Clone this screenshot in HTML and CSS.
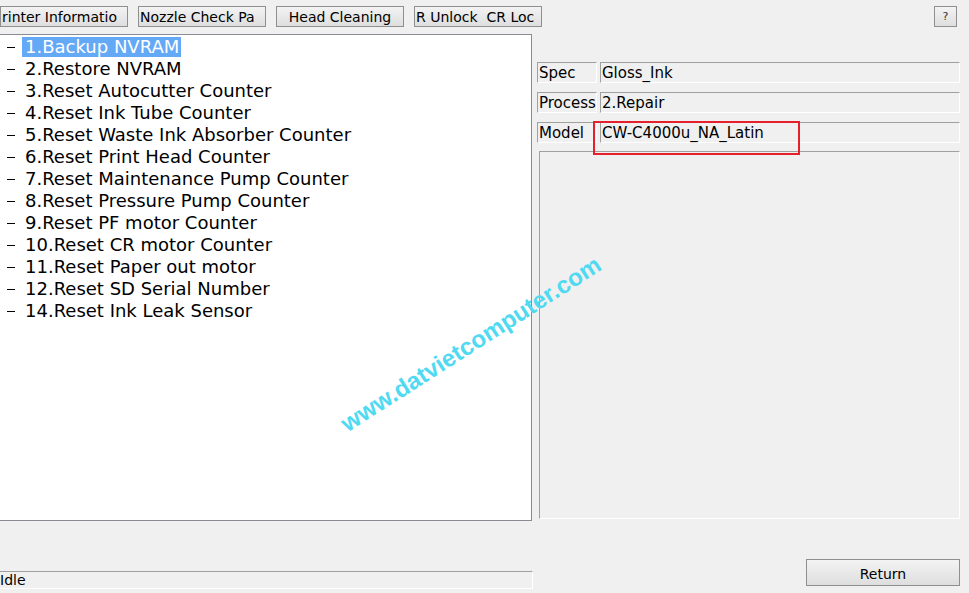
FILE: index.html
```html
<!DOCTYPE html>
<html lang="en">
<head>
  <meta charset="UTF-8">
  <meta name="viewport" content="width=device-width, initial-scale=1.0">
  <title>Maintenance</title>
  <link rel="stylesheet" href="styles.css">
</head>
<body>
  <div class="toolbar">
    <button type="button" class="tool-btn">rinter Informatio</button>
    <button type="button" class="tool-btn">Nozzle Check Pa</button>
    <button type="button" class="tool-btn center">Head Cleaning</button>
    <button type="button" class="tool-btn">R Unlock&nbsp;&nbsp;CR Loc</button>
    <button type="button" class="help-btn">?</button>
  </div>

  <div class="main">
    <!-- Left: function tree and status -->
    <div class="left">
      <ul class="tree">
        <li class="selected"><span>1.Backup NVRAM</span></li>
        <li><span>2.Restore NVRAM</span></li>
        <li><span>3.Reset Autocutter Counter</span></li>
        <li><span>4.Reset Ink Tube Counter</span></li>
        <li><span>5.Reset Waste Ink Absorber Counter</span></li>
        <li><span>6.Reset Print Head Counter</span></li>
        <li><span>7.Reset Maintenance Pump Counter</span></li>
        <li><span>8.Reset Pressure Pump Counter</span></li>
        <li><span>9.Reset PF motor Counter</span></li>
        <li><span>10.Reset CR motor Counter</span></li>
        <li><span>11.Reset Paper out motor</span></li>
        <li><span>12.Reset SD Serial Number</span></li>
        <li><span>14.Reset Ink Leak Sensor</span></li>
      </ul>
      <div class="status">Idle</div>
    </div>

    <!-- Right: printer info -->
    <div class="right">
      <div class="fields">
        <div class="field"><div class="label">Spec</div><div class="value">Gloss_Ink</div></div>
        <div class="field"><div class="label">Process</div><div class="value">2.Repair</div></div>
        <div class="field model"><div class="label">Model</div><div class="value">CW-C4000u_NA_Latin</div></div>
      </div>
      <div class="log"></div>
      <button type="button" class="return-btn">Return</button>
    </div>
  </div>

  <div class="watermark">www.datvietcomputer.com</div>
</body>
</html>
```

FILE: styles.css
```css
body {
  margin: 0;
  background-color: #f0f0f0;
  font-family: "DejaVu Sans", Verdana, sans-serif;
  color: #000;
  width: 969px;
  height: 593px;
  overflow: hidden;
  position: relative;
}
.toolbar {
  display: flex;
  gap: 10px;
  margin: 6px 12px 0 0;
  height: 21px;
}
.tool-btn, .help-btn, .return-btn {
  font-family: "DejaVu Sans", Verdana, sans-serif;
  border: 1px solid #8f8f8f;
  background: linear-gradient(#f3f3f3, #dedede);
  color: #000;
  padding: 0;
  margin: 0;
  cursor: pointer;
}
.tool-btn {
  flex: 0 0 128px;
  min-width: 0;
  height: 21px;
  font-size: 14px;
  line-height: 21px;
  text-align: left;
  padding-left: 1px;
  white-space: nowrap;
}
.tool-btn.center {
  text-align: center;
  padding-left: 0;
}
.help-btn {
  margin-left: auto;
  flex: 0 0 23px;
  height: 21px;
  font-size: 11px;
  color: #333;
}
.main {
  display: flex;
  margin-top: 7px;
}
.left {
  width: 533px;
}
.tree {
  list-style: none;
  margin: 0;
  padding: 1px 0 0 0;
  width: 531px;
  height: 484px;
  background: #fff;
  border: 1px solid #8b8b93;
  border-left: none;
  font-size: 18px;
}
.tree li {
  height: 22px;
  line-height: 22px;
  padding-left: 22px;
  position: relative;
  white-space: nowrap;
}
.tree li::before {
  content: "";
  position: absolute;
  left: 7px;
  top: 11px;
  width: 8px;
  height: 1px;
  background: #000;
}
.tree li span {
  display: inline-block;
  padding: 0 2px 0 3px;
  line-height: 20px;
}
.tree li.selected span {
  background: #64a9f6;
  color: #fff;
}
.status {
  margin-top: 50px;
  height: 16px;
  width: 532px;
  border-top: 1px solid #a0a0a0;
  border-right: 1px solid #fff;
  border-bottom: 1px solid #fff;
  font-size: 14px;
  line-height: 17px;
}
.right {
  margin-left: 4px;
  width: 423px;
  display: flex;
  flex-direction: column;
}
.fields {
  display: flex;
  flex-direction: column;
  gap: 9px;
  padding-top: 28px;
}
.field {
  display: flex;
  gap: 3px;
  height: 21px;
  font-size: 15px;
}
.label, .value {
  border-top: 1px solid #a0a0a0;
  border-left: 1px solid #a0a0a0;
  border-right: 1px solid #fff;
  border-bottom: 1px solid #fff;
  line-height: 20px;
  padding-left: 1px;
  white-space: nowrap;
}
.label {
  width: 57px;
}
.value {
  flex: 1;
}
.model {
  position: relative;
}
.model::after {
  content: "";
  position: absolute;
  left: 56px;
  top: -1px;
  width: 203px;
  height: 30px;
  border: 2px solid #e51f2b;
}
.log {
  margin: 8px 0 0 2px;
  height: 366px;
  border-top: 1px solid #a0a0a0;
  border-left: 1px solid #a0a0a0;
  border-right: 1px solid #fff;
  border-bottom: 1px solid #fff;
}
.return-btn {
  margin: 40px 0 0 auto;
  width: 154px;
  height: 27px;
  font-size: 14px;
  padding-top: 2px;
}
.watermark {
  position: absolute;
  left: 471px;
  top: 344px;
  transform: translate(-50%, -50%) rotate(-32.6deg);
  font-family: "Liberation Sans", Arial, sans-serif;
  font-weight: bold;
  font-size: 24px;
  color: #50daf2;
  white-space: nowrap;
  pointer-events: none;
}
```
